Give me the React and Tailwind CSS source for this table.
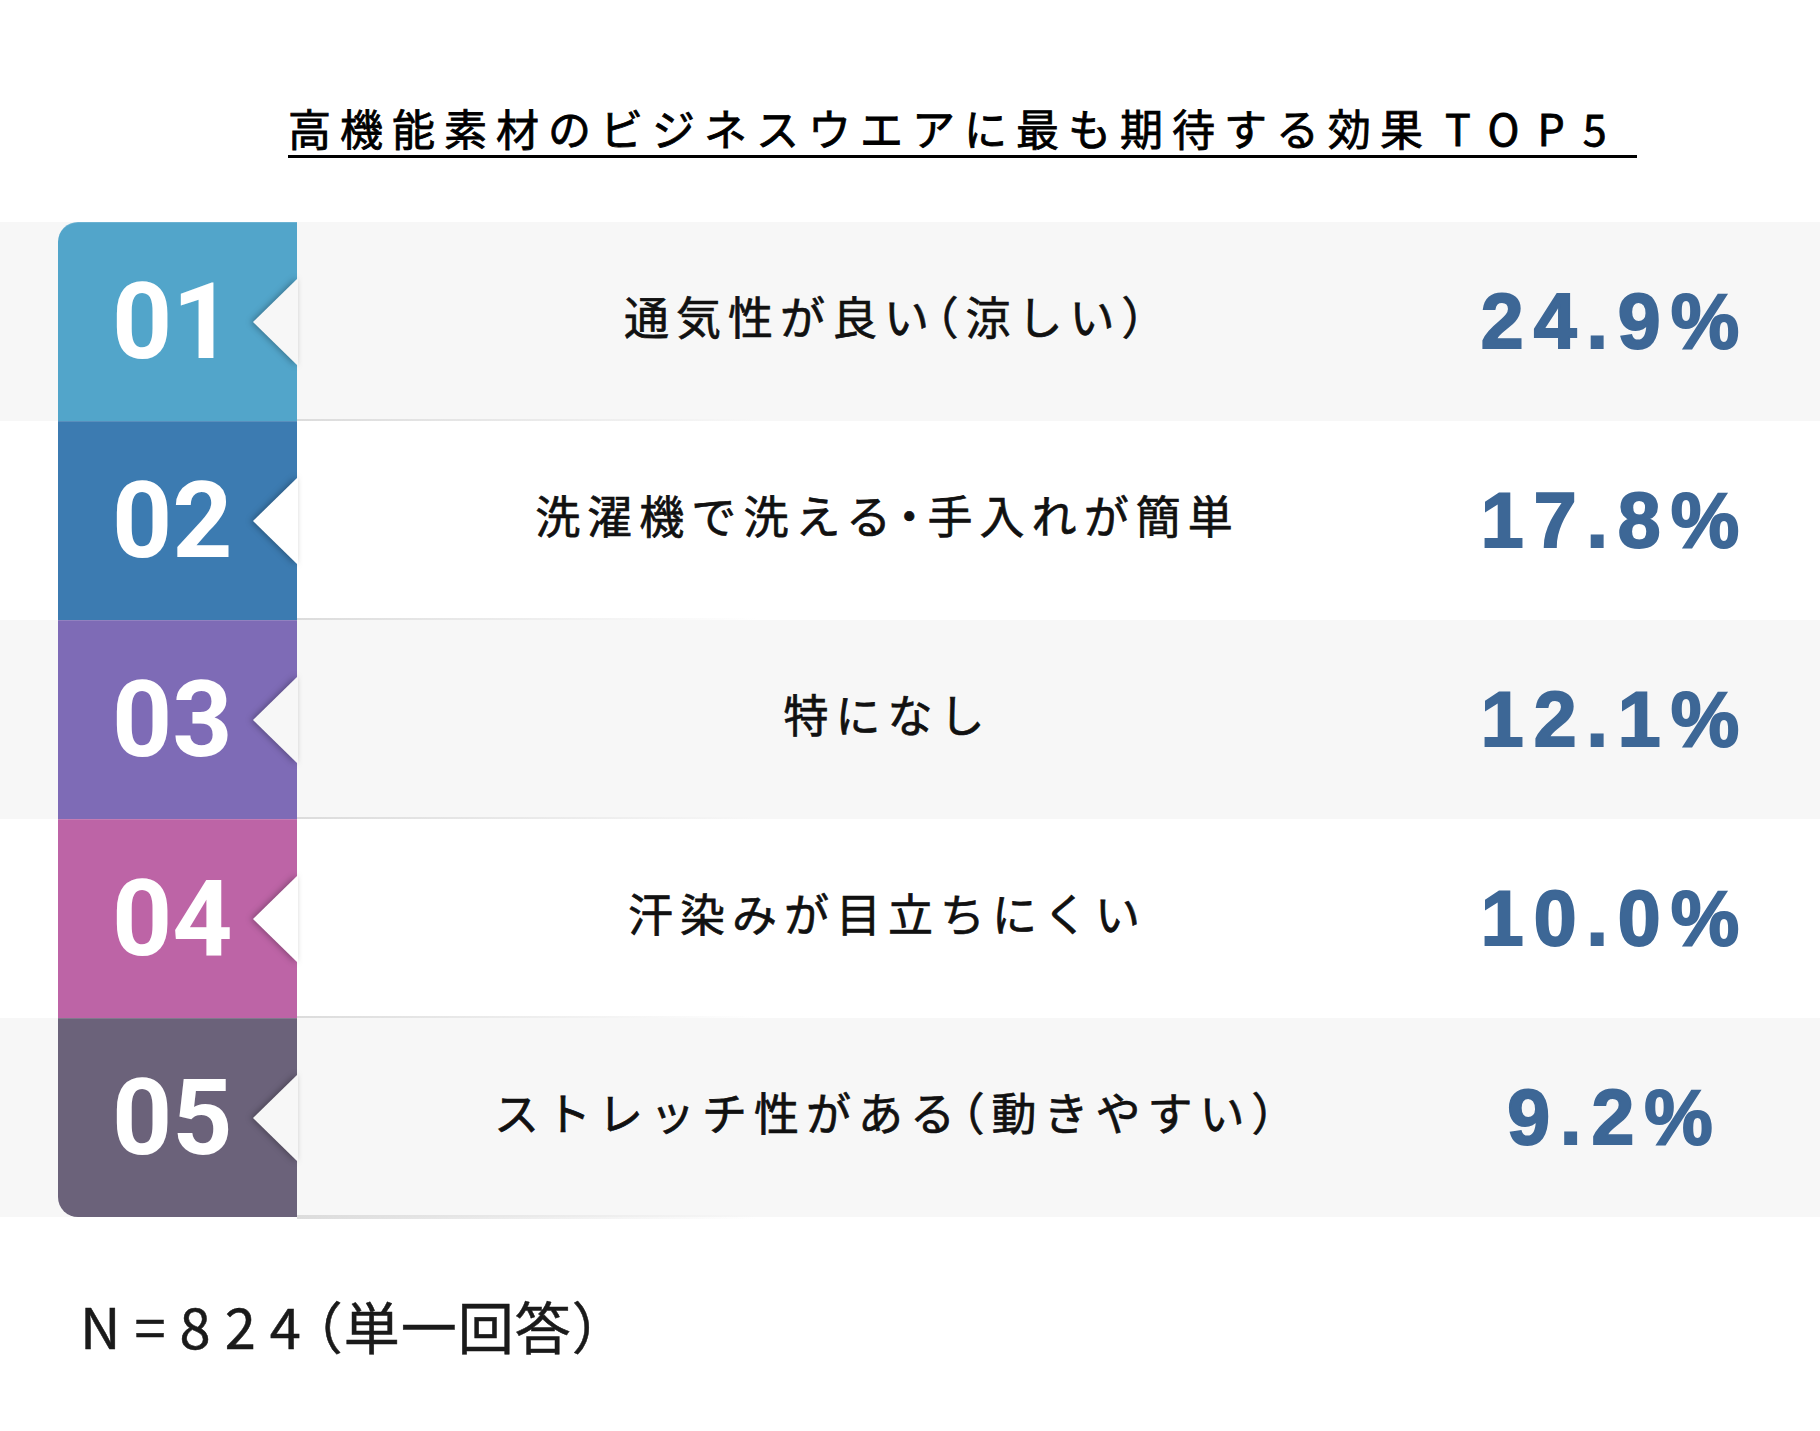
const rows = [
  { no: '01', label: '通気性が良い（涼しい）', pct: '24.9%', badge: 'bg-[#52a5ca]', bg: 'bg-[#f7f7f7]', fill: '#f7f7f7' },
  { no: '02', label: '洗濯機で洗える・手入れが簡単', pct: '17.8%', badge: 'bg-[#3c7bb1]', bg: 'bg-white', fill: '#ffffff' },
  { no: '03', label: '特になし', pct: '12.1%', badge: 'bg-[#7e6bb6]', bg: 'bg-[#f7f7f7]', fill: '#f7f7f7' },
  { no: '04', label: '汗染みが目立ちにくい', pct: '10.0%', badge: 'bg-[#bd64a6]', bg: 'bg-white', fill: '#ffffff' },
  { no: '05', label: 'ストレッチ性がある（動きやすい）', pct: '9.2%', badge: 'bg-[#6b627a]', bg: 'bg-[#f7f7f7]', fill: '#f7f7f7' },
]

const jp = "font-['Noto_Sans_CJK_JP','Noto_Sans',sans-serif]"

// parens and middle dot are set half-width, as in the chart
function Label({ text }) {
  return [...text].map((ch, k) =>
    '（）・'.includes(ch) ? (
      <span key={k} className="[font-feature-settings:'halt']">{ch}</span>
    ) : (
      ch
    )
  )
}

function Notch({ fill }) {
  return (
    <svg
      width="46"
      height="90"
      viewBox="0 0 46 90"
      className="absolute right-[-1px] top-1/2 -translate-y-1/2 [filter:drop-shadow(-2px_0px_3px_rgba(0,0,0,0.3))]"
    >
      <polygon points="46,1 1,45 46,89" fill={fill} />
    </svg>
  )
}

function Row({ r, i }) {
  const first = i === 0
  const last = i === rows.length - 1
  return (
    <div className={`relative h-[199px] ${r.bg}`}>
      <div className="grid h-full grid-cols-[58px_239px_1174px_278px]">
        <div />
        <div
          className={`relative flex items-center pl-[54px] border-t border-white/15 ${r.badge} ${first ? 'rounded-tl-[20px]' : ''} ${last ? 'rounded-bl-[20px]' : ''}`}
        >
          <span className="font-['Roboto',sans-serif] text-[105px] font-bold leading-none text-white">{r.no}</span>
          <Notch fill={r.fill} />
        </div>
        <div className="flex items-center justify-center pl-[7px] pb-[12px]">
          <span className={`${jp} text-[45px] leading-none tracking-[7px] text-[#111] [-webkit-text-stroke:0.7px_#111]`}>
            <Label text={r.label} />
          </span>
        </div>
        <div className="flex items-center justify-center pl-[10px]">
          <span className="font-['Liberation_Sans',Arial,sans-serif] text-[77px] font-bold leading-none tracking-[10px] text-[#3d6796] [-webkit-text-stroke:2px_#3d6796]">
            {r.pct}
          </span>
        </div>
      </div>
      <div className="absolute bottom-[-2px] left-[297px] h-[4px] w-[460px] bg-gradient-to-r from-[#dcdcdc] to-transparent" />
    </div>
  )
}

export default function App() {
  return (
    <div className={`min-h-[1431px] w-[1820px] bg-white ${jp}`}>
      <div className="pl-[288px] pt-[106px]">
        <div className="inline-block border-b-[3px] border-black pb-[4px] pr-[12px] text-black [-webkit-text-stroke:0.8px_#000]">
          <span className="text-[43px] leading-[43px] tracking-[9px]">
            高機能素材のビジネスウエアに最も期待する効果
          </span>
          <span className="ml-[13px] text-[43px] leading-[43px] tracking-[18px]">TOP5</span>
        </div>
      </div>

      <div className="mt-[64px]">
        {rows.map((r, i) => (
          <Row key={r.no} r={r} i={i} />
        ))}
      </div>

      <div className="mt-[80px] pl-[80px] text-[56px] leading-none text-[#1a1a1a] [-webkit-text-stroke:0.5px_#1a1a1a]">
        <span className="tracking-[14px]">N=824</span>
        <span className="tracking-[1px] [font-feature-settings:'halt']">（</span>
        <span className="tracking-[1px]">単一回答）</span>
      </div>
    </div>
  )
}
